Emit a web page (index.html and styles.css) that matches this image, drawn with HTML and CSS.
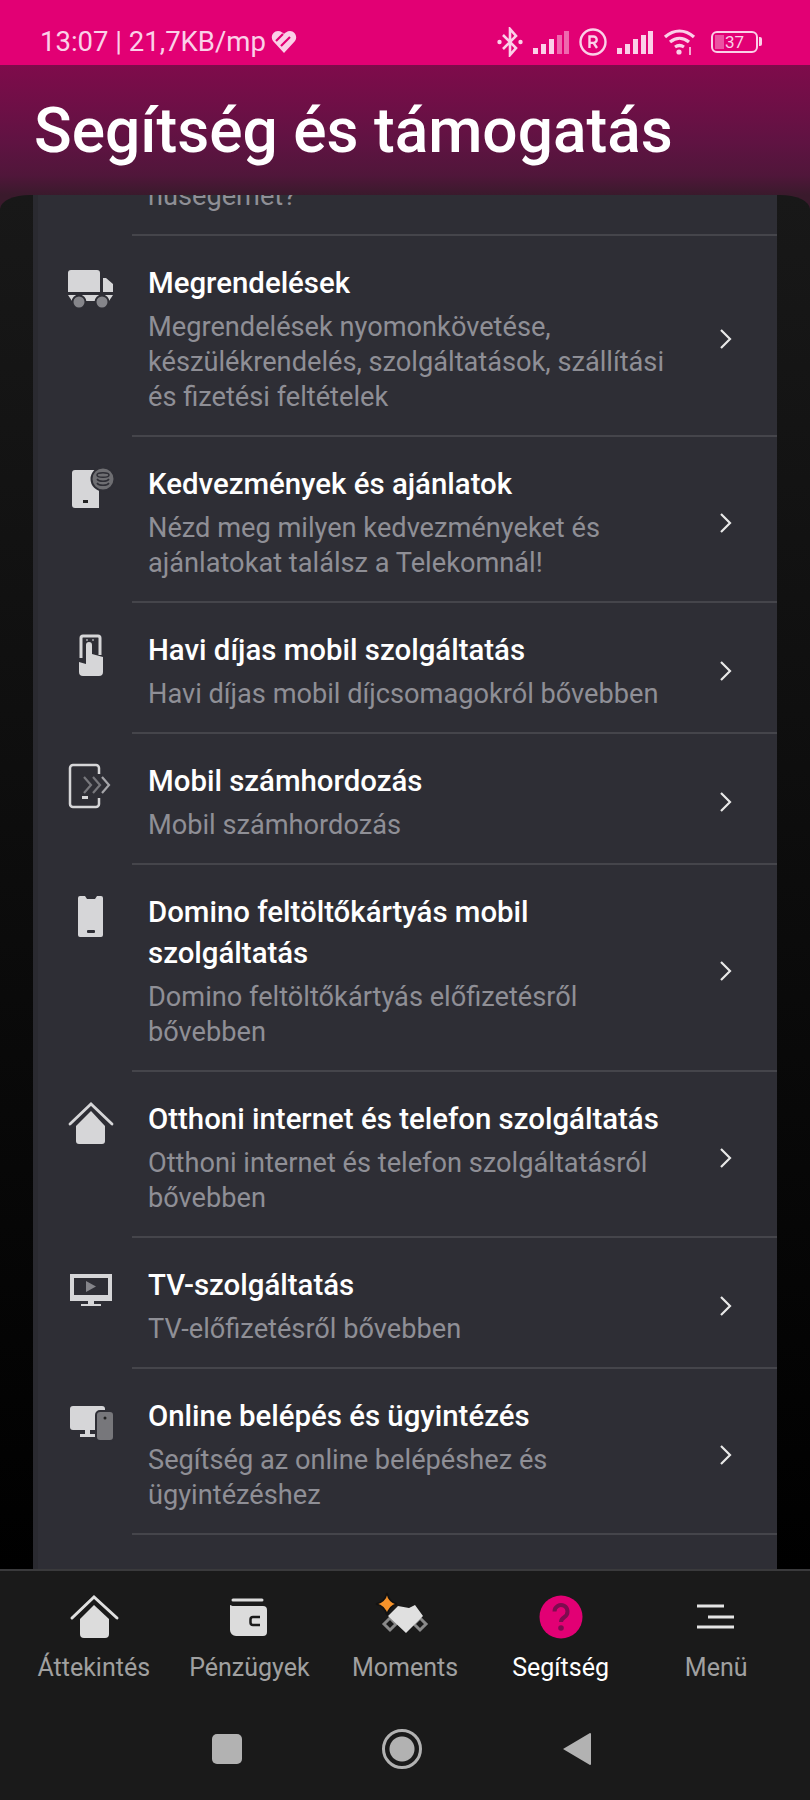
FILE: index.html
```html
<!DOCTYPE html>
<html lang="hu">
<head>
    <meta charset="UTF-8">
    <meta name="viewport" content="width=device-width, initial-scale=1.0">
    <title>Segítség és támogatás</title>
    <link rel="stylesheet" href="styles.css">
</head>
<body>

<div class="screen">
    <div class="status_bar">
        <div class="status_left">
            <span>13:07 | 21,7KB/mp</span>
            <svg class="heart" viewBox="0 0 26 24">
                <path d="M13 23 2 11C-1 7 2 1 7 1c3 0 5 2 6 3 1-1 3-3 6-3 5 0 8 6 5 10z" fill="#fbd0e8"/>
                <path d="M5 11l7-7M10 16l9-9" stroke="#e20074" stroke-width="2.200"/>
            </svg>
        </div>
        <div class="status_right">
            <svg width="26" height="30" viewBox="0 0 26 30" fill="none" stroke="#fbd0e8" stroke-width="2.600"><path d="M6 8 19 21l-6 7V2l6 7L6 22"/><circle cx="2.500" cy="15" r="2.200" fill="#fbd0e8" stroke="none"/><circle cx="23.500" cy="15" r="2.200" fill="#fbd0e8" stroke="none"/></svg>
            <svg width="36" height="24" viewBox="0 0 36 24" fill="#fbd0e8"><rect x="0" y="18" width="5" height="6"/><rect x="8" y="14" width="5" height="10"/><rect x="16" y="9" width="5" height="15"/><rect x="24" y="5" width="5" height="19" opacity=".5"/><rect x="31" y="1" width="5" height="23" opacity=".5"/></svg>
            <svg width="28" height="28" viewBox="0 0 28 28" fill="none" stroke="#fbd0e8" stroke-width="2.400"><circle cx="14" cy="14" r="12.500"/><path d="M10.500 20V8.500h4a3.200 3.200 0 0 1 0 6.400h-4m4 0 3.500 5.100"/></svg>
            <svg width="36" height="24" viewBox="0 0 36 24" fill="#fbd0e8"><rect x="0" y="18" width="5" height="6"/><rect x="8" y="14" width="5" height="10"/><rect x="16" y="9" width="5" height="15"/><rect x="24" y="5" width="5" height="19"/><rect x="31" y="1" width="5" height="23"/></svg>
            <svg width="33" height="28" viewBox="0 0 33 28" fill="none" stroke="#fbd0e8" stroke-width="3.200"><path d="M2 9c9-8 20-8 29 0M7 14c6-5 13-5 19 0M12 19c3-2 6-2 9 0"/><circle cx="16" cy="24" r="2.600" fill="#fbd0e8" stroke="none"/><path d="M27 19v8" stroke-width="1.600"/></svg>
            <div class="battery">
                <div class="battery_body"><span class="battery_fill"></span>37</div>
                <span class="battery_cap"></span>
            </div>
        </div>
    </div>

    <header class="page_header">
        <h1>Segítség és támogatás</h1>
    </header>

    <main class="content">
        <ul class="card">
            <li class="row row_cut">
                <div class="row_icon"></div>
                <div class="row_body">
                    <p class="row_sub">hűségemet?</p>
                </div>
            </li>

            <li class="row">
                <svg class="row_icon" viewBox="0 0 52 52">
                    <path class="ic" d="M4 10a3 3 0 0 1 3-3h26a3 3 0 0 1 3 3v19H4zM39 15h3l7 6v8H39z"/>
                    <path class="ic" d="M4 32h45l-4 6H8z"/>
                    <circle cx="15" cy="39" r="6.500" fill="#85858a" stroke="#2e2e35" stroke-width="2"/>
                    <circle cx="38" cy="39" r="6.500" fill="#85858a" stroke="#2e2e35" stroke-width="2"/>
                </svg>
                <div class="row_body">
                    <div class="row_text">
                        <h2 class="row_title">Megrendelések</h2>
                        <p class="row_sub">Megrendelések nyomonkövetése, készülékrendelés, szolgáltatások, szállítási és fizetési feltételek</p>
                    </div>
                    <svg class="chevron" viewBox="0 0 14 22"><path d="M2 2l9 9-9 9"/></svg>
                </div>
            </li>

            <li class="row">
                <svg class="row_icon" viewBox="0 0 52 52">
                    <path class="ic" d="M11 6h24v38H11a3 3 0 0 1-3-3V9a3 3 0 0 1 3-3z"/>
                    <rect x="19" y="36" width="5" height="3" fill="#222"/>
                    <circle cx="39" cy="15" r="11.500" fill="#6e6e72" stroke="#2e2e35" stroke-width="2"/>
                    <path d="M33 11c0-3 12-3 12 0s-12 3-12 0zM33 15c2 3 10 3 12 0M33 19c2 3 10 3 12 0" fill="none" stroke="#2e2e35" stroke-width="1.500"/>
                </svg>
                <div class="row_body">
                    <div class="row_text">
                        <h2 class="row_title">Kedvezmények és ajánlatok</h2>
                        <p class="row_sub">Nézd meg milyen kedvezményeket és ajánlatokat találsz a Telekomnál!</p>
                    </div>
                    <svg class="chevron" viewBox="0 0 14 22"><path d="M2 2l9 9-9 9"/></svg>
                </div>
            </li>

            <li class="row">
                <svg class="row_icon" viewBox="0 0 52 52">
                    <path d="M17 28V8a2 2 0 0 1 2-2h15a2 2 0 0 1 2 2v17" fill="none" stroke="#d6d6d8" stroke-width="3"/>
                    <path class="ic" d="M22 15a3 3 0 0 1 6 0v9l11 3v15a4 4 0 0 1-4 4H19a4 4 0 0 1-4-4V32l7 2z"/>
                    <rect x="22" y="9" width="2" height="2" fill="#85858a"/>
                    <rect x="28" y="9" width="2" height="2" fill="#85858a"/>
                </svg>
                <div class="row_body">
                    <div class="row_text">
                        <h2 class="row_title">Havi díjas mobil szolgáltatás</h2>
                        <p class="row_sub">Havi díjas mobil díjcsomagokról bővebben</p>
                    </div>
                    <svg class="chevron" viewBox="0 0 14 22"><path d="M2 2l9 9-9 9"/></svg>
                </div>
            </li>

            <li class="row">
                <svg class="row_icon" viewBox="0 0 52 52">
                    <path d="M35 13V7a3 3 0 0 0-3-3H9a3 3 0 0 0-3 3v36a3 3 0 0 0 3 3h23a3 3 0 0 0 3-3v-6" fill="none" stroke="#d6d6d8" stroke-width="2.500"/>
                    <path d="M20 16l7 8-7 8M29 16l7 8-7 8" fill="none" stroke="#77777c" stroke-width="2.200"/>
                    <path d="M38 16l7 8-7 8" fill="none" stroke="#a5a5a9" stroke-width="2.200"/>
                    <rect x="18" y="35" width="6" height="3" fill="#d6d6d8"/>
                </svg>
                <div class="row_body">
                    <div class="row_text">
                        <h2 class="row_title">Mobil számhordozás</h2>
                        <p class="row_sub">Mobil számhordozás</p>
                    </div>
                    <svg class="chevron" viewBox="0 0 14 22"><path d="M2 2l9 9-9 9"/></svg>
                </div>
            </li>

            <li class="row">
                <svg class="row_icon" viewBox="0 0 52 52">
                    <path class="ic" d="M16 4h5l2 3h8l2-3h4a2 2 0 0 1 2 2v37a2 2 0 0 1-2 2H16a2 2 0 0 1-2-2V6a2 2 0 0 1 2-2z"/>
                    <rect x="23" y="38" width="8" height="3" rx="1" fill="#2e2e35"/>
                </svg>
                <div class="row_body">
                    <div class="row_text">
                        <h2 class="row_title">Domino feltöltőkártyás mobil szolgáltatás</h2>
                        <p class="row_sub">Domino feltöltőkártyás előfizetésről bővebben</p>
                    </div>
                    <svg class="chevron" viewBox="0 0 14 22"><path d="M2 2l9 9-9 9"/></svg>
                </div>
            </li>

            <li class="row">
                <svg class="row_icon" viewBox="0 0 52 52">
                    <path d="M6 25 27 5l21 20" fill="none" stroke="#d6d6d8" stroke-width="2.800" stroke-linecap="round"/>
                    <path class="ic" d="M12 27 27 12l14 15v15a3 3 0 0 1-3 3H15a3 3 0 0 1-3-3z"/>
                </svg>
                <div class="row_body">
                    <div class="row_text">
                        <h2 class="row_title">Otthoni internet és telefon szolgáltatás</h2>
                        <p class="row_sub">Otthoni internet és telefon szolgáltatásról bővebben</p>
                    </div>
                    <svg class="chevron" viewBox="0 0 14 22"><path d="M2 2l9 9-9 9"/></svg>
                </div>
            </li>

            <li class="row">
                <svg class="row_icon" viewBox="0 0 52 52">
                    <path class="ic" d="M6 9h42v27H6z"/>
                    <rect x="10" y="13" width="34" height="17" fill="#2e2e35"/>
                    <path d="M22 16l10 5.500-10 5.500z" fill="#85858a"/>
                    <path class="ic" d="M24 36h6v3h7v2H17v-2h7z"/>
                </svg>
                <div class="row_body">
                    <div class="row_text">
                        <h2 class="row_title">TV-szolgáltatás</h2>
                        <p class="row_sub">TV-előfizetésről bővebben</p>
                    </div>
                    <svg class="chevron" viewBox="0 0 14 22"><path d="M2 2l9 9-9 9"/></svg>
                </div>
            </li>

            <li class="row">
                <svg class="row_icon" viewBox="0 0 52 52">
                    <path class="ic" d="M9 10h29a3 3 0 0 1 3 3v21H9a3 3 0 0 1-3-3V13a3 3 0 0 1 3-3z"/>
                    <path class="ic" d="M21 34h5v4h5v3H16v-3h5z"/>
                    <rect x="32" y="15" width="18" height="30" rx="4" fill="#77777b" stroke="#2e2e35" stroke-width="2"/>
                    <circle cx="41" cy="22" r="1.500" fill="#222"/>
                </svg>
                <div class="row_body">
                    <div class="row_text">
                        <h2 class="row_title">Online belépés és ügyintézés</h2>
                        <p class="row_sub">Segítség az online belépéshez és ügyintézéshez</p>
                    </div>
                    <svg class="chevron" viewBox="0 0 14 22"><path d="M2 2l9 9-9 9"/></svg>
                </div>
            </li>
        </ul>
    </main>

    <nav class="tab_bar">
        <a class="tab">
            <svg class="tab_icon" viewBox="0 0 52 52">
                <path d="M4 27 26 6l23 21" fill="none" stroke="#e0e0e0" stroke-width="3" stroke-linecap="round"/>
                <path d="M12 28 26 14l15 14v15a4 4 0 0 1-4 4H16a4 4 0 0 1-4-4z" fill="#dcdcdc"/>
            </svg>
            <span>Áttekintés</span>
        </a>
        <a class="tab">
            <svg class="tab_icon" viewBox="0 0 52 52">
                <path d="M10 9h29" stroke="#dcdcdc" stroke-width="3" stroke-linecap="round"/>
                <path d="M7 14c2 1 3 1 5 1h28a4 4 0 0 1 4 4v22a4 4 0 0 1-4 4H13a6 6 0 0 1-6-6z" fill="#dcdcdc"/>
                <path d="M37 26h-7a2.500 2.500 0 0 0-2.500 2.500v3A2.500 2.500 0 0 0 30 34h7" fill="none" stroke="#1a1a1a" stroke-width="2.500"/>
            </svg>
            <span>Pénzügyek</span>
        </a>
        <a class="tab">
            <svg class="tab_icon moments" viewBox="0 0 62 52">
                <path d="M10 33l6-6 6 6-6 6zM40 33l6-6 6 6-6 6z" fill="none" stroke="#8a8a8a" stroke-width="3"/>
                <path d="M24 15l11 2 6-3 8 11-17 17-18-17z" fill="#e0e0e0"/>
                <path d="M13 2q2 9 10 11-8 2-10 11-2-9-11-11 9-2 11-11z" fill="#f5922a" stroke="#111" stroke-width="1.500"/>
            </svg>
            <span>Moments</span>
        </a>
        <a class="tab tab_active">
            <svg class="tab_icon" viewBox="0 0 52 52">
                <circle cx="26" cy="26" r="21.500" fill="#e20074"/>
                <path d="M19.500 20.500a6.500 6.500 0 1 1 10 5.500c-2.300 1.500-3.500 2.500-3.500 5" fill="none" stroke="#7d0c4f" stroke-width="4"/>
                <circle cx="26" cy="37" r="2.800" fill="#7d0c4f"/>
            </svg>
            <span>Segítség</span>
        </a>
        <a class="tab">
            <svg class="tab_icon" viewBox="0 0 52 52" stroke="#e4e4e4" stroke-width="3.200">
                <path d="M7 15h27M18 26h26M7 36h37"/>
            </svg>
            <span>Menü</span>
        </a>
    </nav>

    <div class="nav_bar">
        <span class="nav_square"></span>
        <span class="nav_circle"></span>
        <svg class="nav_back" viewBox="0 0 30 36"><path d="M28 2a1 1 0 0 1 1 1v30a1 1 0 0 1-1 1L1 18z" fill="#b2b2b2"/></svg>
    </div>
</div>

</body>
</html>
```
FILE: styles.css
```css
* {
  box-sizing: border-box;
}

body {
  margin: 0;
  background: #1a1a1a;
  font-family: 'Roboto', sans-serif;
}

.screen {
  display: flex;
  flex-direction: column;
  width: 810px;
  height: 1800px;
  overflow: hidden;
  background: #3a1a2c;
}

.status_bar {
  display: flex;
  justify-content: space-between;
  align-items: center;
  height: 65px;
  padding: 18px 48px 0 40px;
  background: #e20074;
  color: #fbd0e8;
  font-size: 27.5px;
}

.status_left,
.status_right {
  display: flex;
  align-items: center;
}

.status_left {
  gap: 5px;
}

.status_right {
  gap: 10px;
}

.heart {
  width: 26px;
  height: 24px;
}

.battery {
  display: flex;
  align-items: center;
  gap: 1px;
  margin-left: 5px;
}

.battery_body {
  position: relative;
  width: 47px;
  height: 22px;
  border: 2px solid #fbd0e8;
  border-radius: 6px;
  color: #fbd0e8;
  font-size: 17px;
  line-height: 18px;
  text-align: center;
}

.battery_fill {
  position: absolute;
  left: 2px;
  top: 2px;
  bottom: 2px;
  width: 9px;
  background: rgba(251, 208, 232, 0.4);
}

.battery_cap {
  width: 3px;
  height: 9px;
  border-radius: 0 2px 2px 0;
  background: #fbd0e8;
}

.page_header {
  height: 130px;
  padding: 0 0 0 34px;
  background: linear-gradient(#7f0b4b, #5f1342 60%, #50163a 85%, #3a1a2c);
}

.page_header h1 {
  margin: 0;
  color: #fff;
  font-size: 62.2px;
  font-weight: 500;
  line-height: 132px;
  white-space: nowrap;
}

.content {
  flex: 1;
  min-height: 0;
  padding: 0 33px;
  overflow: hidden;
  border-radius: 30px 30px 0 0 / 14px 14px 0 0;
  background: linear-gradient(#181818, #000);
}

.card {
  height: 100%;
  margin: 0;
  padding: 0;
  list-style: none;
  background: #2e2e35;
  box-shadow: inset 5px 0 #2a2a30;
}

.row {
  display: flex;
}

.row_icon {
  flex: none;
  width: 52px;
  height: 52px;
  margin: 27px 16px 0 31px;
}

.ic {
  fill: #d6d6d8;
}

.row_body {
  display: flex;
  flex: 1;
  align-items: center;
  padding: 27px 44px 20px 16px;
  border-bottom: 2px solid #45454b;
}

.row_text {
  width: 536px;
}

.row_title {
  margin: 0 0 6px;
  color: #fff;
  font-size: 29.4px;
  font-weight: 500;
  line-height: 41px;
}

.row_sub {
  margin: 0;
  color: #8f8f96;
  font-size: 27.2px;
  line-height: 35px;
}

.chevron {
  flex: none;
  width: 14px;
  height: 22px;
  margin-left: auto;
  fill: none;
  stroke: #e8e8e8;
  stroke-width: 2.2;
}

.row_cut {
  height: 41px;
}

.row_cut .row_icon {
  height: 0;
  margin-top: 0;
}

.row_cut .row_body {
  align-items: flex-end;
  padding-top: 0;
}

.tab_bar {
  display: grid;
  grid-template-columns: repeat(5, 1fr);
  height: 146px;
  padding: 20px 16px 0;
  border-top: 2px solid #3a3a3c;
  background: #1a1a1a;
}

.tab {
  display: flex;
  flex-direction: column;
  align-items: center;
  color: #a0a0a0;
  font-size: 25px;
  line-height: 34px;
}

.tab_active {
  color: #fff;
}

.tab_icon {
  width: 52px;
  height: 52px;
  margin-bottom: 8px;
}

.moments {
  width: 62px;
}

.nav_bar {
  display: grid;
  grid-template-columns: repeat(3, 175px);
  justify-content: center;
  justify-items: center;
  align-items: center;
  height: 85px;
  padding: 0 7px 18px 0;
  background: #1a1a1a;
}

.nav_square {
  width: 30px;
  height: 30px;
  border-radius: 5px;
  background: #b2b2b2;
}

.nav_circle {
  display: block;
  width: 40px;
  height: 40px;
  border: 3px solid #b2b2b2;
  border-radius: 50%;
  background: radial-gradient(circle, #b2b2b2 0, #b2b2b2 12px, transparent 13px);
}

.nav_back {
  width: 30px;
  height: 36px;
}
```
